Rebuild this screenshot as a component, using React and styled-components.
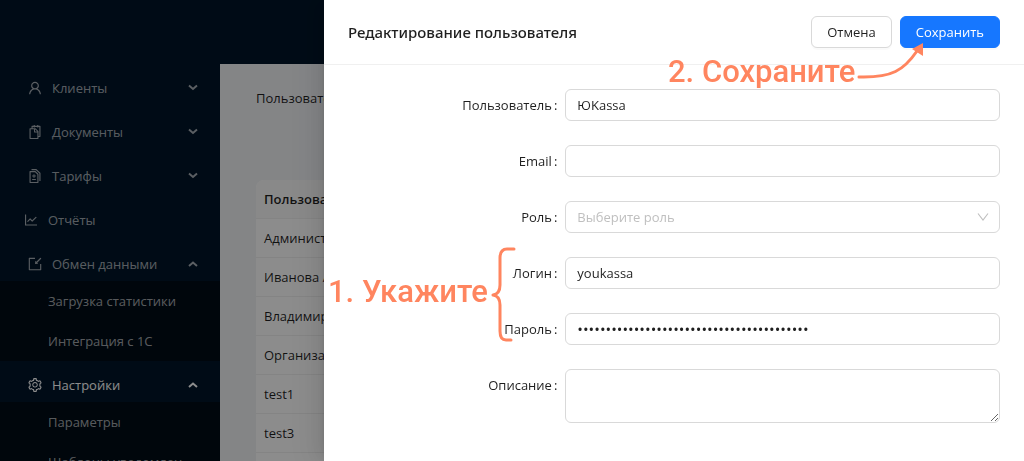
import React, { useState } from 'react';
import styled, { createGlobalStyle, css } from 'styled-components';
import {
  AiOutlineUser,
  AiOutlineSnippets,
  AiOutlineDiff,
  AiOutlineLineChart,
  AiOutlineImport,
  AiOutlineSetting,
} from 'react-icons/ai';

const GlobalStyle = createGlobalStyle`
  * { box-sizing: border-box; }
  body {
    margin: 0;
    overflow: hidden;
    font: 13px/22px "Open Sans", "Noto Sans", sans-serif;
    color: rgba(0, 0, 0, 0.88);
  }
`;

const Layout = styled.div`
  display: flex;
  flex-direction: column;
  height: 100vh;
  overflow: hidden;
  background: #001529;
`;

const TopBar = styled.header`
  flex: 0 0 64px;
`;

const Workspace = styled.div`
  display: flex;
  flex: 1;
  min-height: 0;
`;

const Sidebar = styled.nav`
  flex: 0 0 220px;
  overflow: hidden;
  background: #001529;
`;

const MenuItem = styled.a`
  display: flex;
  align-items: center;
  gap: 9px;
  height: 40px;
  margin-top: 4px;
  margin-bottom: ${(p) => (p.$open ? '-3px' : '0')};
  padding: 0 22px 0 ${(p) => (p.$leaf ? '23px' : '27px')};
  color: ${(p) => (p.$active ? '#fff' : 'rgba(255, 255, 255, 0.65)')};
  text-decoration: none;

  > svg { flex: none; }
  > span { flex: 1; }
`;

const SubMenu = styled.div`
  background: #000c17;
`;

const SubItem = styled.a`
  display: block;
  height: 40px;
  padding: 0 24px 0 48px;
  overflow: hidden;
  color: rgba(255, 255, 255, 0.65);
  line-height: 40px;
  text-decoration: none;
  text-overflow: ellipsis;
  white-space: nowrap;
`;

const Content = styled.main`
  flex: 1;
  padding: 23px 36px;
  background: #f0f2f5;
`;

const Breadcrumb = styled.div`
  margin-bottom: 71px;
`;

const UserTable = styled.table`
  width: 100%;
  border-collapse: separate;
  border-spacing: 0;
  border-radius: 8px;
  overflow: hidden;
  background: #fff;

  th, td {
    height: 39px;
    padding: 0 8px;
    border-bottom: 1px solid #f0f0f0;
    text-align: left;
    font-weight: 400;
  }
  th {
    background: #fafafa;
    font-weight: 600;
  }
`;

const Mask = styled.div`
  position: fixed;
  inset: 0;
  background: rgba(0, 0, 0, 0.45);
`;

const Drawer = styled.section`
  position: fixed;
  top: 0;
  right: 0;
  bottom: 0;
  width: 700px;
  max-width: 100%;
  background: #fff;
  box-shadow:
    -6px 0 16px 0 rgba(0, 0, 0, 0.08),
    -3px 0 6px -4px rgba(0, 0, 0, 0.12),
    -9px 0 28px 8px rgba(0, 0, 0, 0.05);
`;

const DrawerHeader = styled.header`
  display: flex;
  align-items: center;
  gap: 8px;
  height: 65px;
  padding: 0 24px;
  border-bottom: 1px solid #f0f0f0;
`;

const DrawerTitle = styled.h1`
  flex: 1;
  margin: 0;
  font-size: 15px;
  font-weight: 500;
  font-family: "Noto Sans", sans-serif;
`;

const Button = styled.button`
  height: 32px;
  padding: 0 15px;
  border: 1px solid #d9d9d9;
  border-radius: 6px;
  background: #fff;
  box-shadow: 0 2px 0 rgba(0, 0, 0, 0.02);
  color: inherit;
  font: inherit;

  ${(p) =>
    p.$primary &&
    css`
      border-color: #1677ff;
      background: #1677ff;
      color: #fff;
    `}
`;

const Form = styled.form`
  display: flex;
  flex-direction: column;
  gap: 24px;
  padding: 24px;
`;

const Field = styled.div`
  display: flex;
  align-items: flex-start;
`;

const Label = styled.label`
  flex: 0 0 33.333%;
  padding-right: 8px;
  line-height: 32px;
  text-align: right;

  &::after {
    content: ':';
    margin-left: 2px;
  }
`;

const control = css`
  display: block;
  flex: 1;
  min-width: 0;
  width: 100%;
  height: 32px;
  padding: 4px 11px;
  border: 1px solid #d9d9d9;
  border-radius: 6px;
  outline: none;
  background: #fff;
  color: inherit;
  font: inherit;
`;

const Input = styled.input`
  ${control}

  &[type='password'] { font-size: 15px; }
`;

const TextArea = styled.textarea`
  ${control}
  height: 54px;
  resize: vertical;
`;

const SelectBox = styled.div`
  position: relative;
  flex: 1;

  > svg {
    position: absolute;
    top: 10px;
    right: 11px;
    pointer-events: none;
  }
`;

const Select = styled.select`
  ${control}
  appearance: none;
  color: #bfbfbf;
`;

const Note = styled.p`
  position: absolute;
  top: ${(p) => p.$top};
  left: ${(p) => p.$left};
  margin: 0;
  color: #ff855f;
  font: 500 31px/36px Roboto, sans-serif;
  white-space: nowrap;
`;

const Mark = styled.svg`
  position: absolute;
  top: ${(p) => p.$top};
  left: ${(p) => p.$left};
  pointer-events: none;
`;

const Caret = ({ up }) => (
  <svg width="10" height="8" viewBox="0 0 10 8" fill="none" stroke="currentColor" strokeWidth="2">
    <path d={up ? 'M1 6 L5 2.6 L9 6' : 'M1 1.5 L5 4.9 L9 1.5'} />
  </svg>
);

const menu = [
  { text: 'Клиенты', Icon: AiOutlineUser },
  { text: 'Документы', Icon: AiOutlineSnippets },
  { text: 'Тарифы', Icon: AiOutlineDiff },
  { text: 'Отчёты', Icon: AiOutlineLineChart, leaf: true },
  { text: 'Обмен данными', Icon: AiOutlineImport, items: ['Загрузка статистики', 'Интеграция с 1С'] },
  { text: 'Настройки', Icon: AiOutlineSetting, active: true, items: ['Параметры', 'Шаблоны уведомлений'] },
];

const users = ['Администратор', 'Иванова Анна', 'Владимир', 'Организация', 'test1', 'test3', ''];

export default function App() {
  const [form, setForm] = useState({
    name: 'ЮKassa',
    email: '',
    role: '',
    login: 'youkassa',
    password: 'x'.repeat(41),
    about: '',
  });
  const bind = (key) => ({
    id: key,
    value: form[key],
    onChange: (e) => setForm({ ...form, [key]: e.target.value }),
  });

  return (
    <>
      <GlobalStyle />
      <Layout>
        <TopBar />
        <Workspace>
          <Sidebar>
            {menu.map(({ text, Icon, leaf, active, items }) => (
              <React.Fragment key={text}>
                <MenuItem href="#" $leaf={leaf} $active={active} $open={!!items}>
                  <Icon size={16} />
                  <span>{text}</span>
                  {!leaf && <Caret up={!!items} />}
                </MenuItem>
                {items && (
                  <SubMenu>
                    {items.map((item) => (
                      <SubItem href="#" key={item}>{item}</SubItem>
                    ))}
                  </SubMenu>
                )}
              </React.Fragment>
            ))}
          </Sidebar>
          <Content>
            <Breadcrumb>Пользователи</Breadcrumb>
            <UserTable>
              <thead>
                <tr><th>Пользователь</th></tr>
              </thead>
              <tbody>
                {users.map((user) => (
                  <tr key={user}><td>{user}</td></tr>
                ))}
              </tbody>
            </UserTable>
          </Content>
        </Workspace>
      </Layout>

      <Mask />
      <Drawer>
        <DrawerHeader>
          <DrawerTitle>Редактирование пользователя</DrawerTitle>
          <Button type="button">Отмена</Button>
          <Button type="submit" form="user-form" $primary>Сохранить</Button>
        </DrawerHeader>
        <Form id="user-form" onSubmit={(e) => e.preventDefault()}>
          <Field>
            <Label htmlFor="name">Пользователь</Label>
            <Input {...bind('name')} />
          </Field>
          <Field>
            <Label htmlFor="email">Email</Label>
            <Input {...bind('email')} />
          </Field>
          <Field>
            <Label htmlFor="role">Роль</Label>
            <SelectBox>
              <Select {...bind('role')}>
                <option value="">Выберите роль</option>
              </Select>
              <svg width="12" height="12" viewBox="0 0 12 12" fill="none" stroke="#bfbfbf" strokeWidth="1.1">
                <path d="M1 2.5 L6 9 L11 2.5" />
              </svg>
            </SelectBox>
          </Field>
          <Field>
            <Label htmlFor="login">Логин</Label>
            <Input {...bind('login')} />
          </Field>
          <Field>
            <Label htmlFor="password">Пароль</Label>
            <Input type="password" {...bind('password')} />
          </Field>
          <Field>
            <Label htmlFor="about">Описание</Label>
            <TextArea {...bind('about')} />
          </Field>
        </Form>

        <Note $top="274px" $left="4px">1. Укажите</Note>
        <Mark $top="245px" $left="166px" width="28" height="100" fill="none" stroke="#ff855f" strokeWidth="3" strokeLinecap="round" strokeLinejoin="round">
          <path d="M24 4 H17 Q10 4 10 13 V40 Q10 49 3 50 Q10 51 10 60 V86 Q10 95 16 95 H21" />
        </Mark>
        <Note $top="54px" $left="344px">2. Сохраните</Note>
        <Mark $top="40px" $left="530px" width="72" height="42">
          <path d="M5 37 C38 38 50 30 63 11" fill="none" stroke="#ff855f" strokeWidth="3" strokeLinecap="round" />
          <path d="M69 3 L58 9 L69 16 Z" fill="#ff855f" />
        </Mark>
      </Drawer>
    </>
  );
}
